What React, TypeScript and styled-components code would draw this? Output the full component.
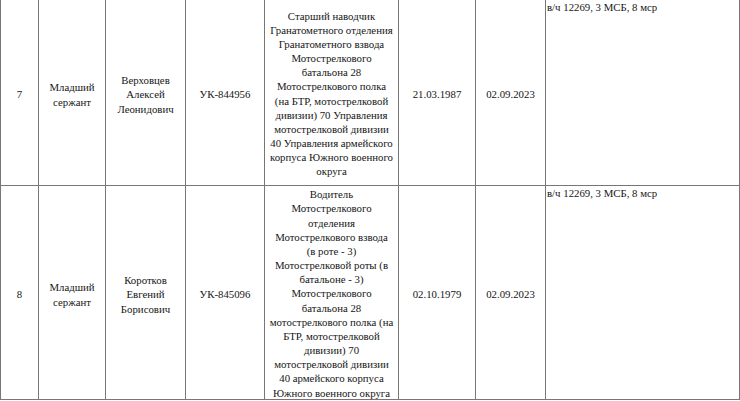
import { Fragment } from "react"
import styled, { createGlobalStyle } from "styled-components"

const GlobalStyle = createGlobalStyle`
    html, body {
        margin: 0;
        padding: 0;
        background: #ffffff;
        overflow: hidden;
        font-family: "Liberation Serif", "Times New Roman", serif;
    }
`

const Sheet = styled.div`
    display: grid;
    grid-template-columns: 37px 66px 79px 78px 133px 76px 69px 193px;
    grid-template-rows: 185px 213px;
    gap: 1px;
    padding: 1px;
    margin-top: -1px;
    width: 740px;
    box-sizing: border-box;
    background-color: #767676;
    font-family: "Liberation Serif", "Times New Roman", serif;
    font-size: 10.8px;
    line-height: 14.15px;
    color: #161616;
`

const Cell = styled.div<{ $tight?: boolean }>`
    display: flex;
    flex-direction: column;
    align-items: center;
    justify-content: center;
    text-align: center;
    background-color: #ffffff;
    padding-top: ${props => props.$tight ? "2px" : "4px"};
    box-sizing: border-box;
    overflow: hidden;
`

const NoteCell = styled.div`
    background-color: #ffffff;
    padding: 0 0 0 1px;
    text-align: left;
    white-space: nowrap;
`

const Line = styled.span`
    display: block;
    white-space: nowrap;
`

interface IRecord {
    num: string
    rank: string[]
    name: string[]
    token: string
    post: string[]
    born: string
    signed: string
    unit: string
}

const records: IRecord[] = [
    {
        num: "7",
        rank: ["Младший", "сержант"],
        name: ["Верховцев", "Алексей", "Леонидович"],
        token: "УК-844956",
        post: [
            "Старший наводчик",
            "Гранатометного отделения",
            "Гранатометного взвода",
            "Мотострелкового",
            "батальона 28",
            "Мотострелкового полка",
            "(на БТР, мотострелковой",
            "дивизии) 70 Управления",
            "мотострелковой дивизии",
            "40 Управления армейского",
            "корпуса Южного военного",
            "округа",
        ],
        born: "21.03.1987",
        signed: "02.09.2023",
        unit: "в/ч 12269, 3 МСБ, 8 мср",
    },
    {
        num: "8",
        rank: ["Младший", "сержант"],
        name: ["Коротков", "Евгений", "Борисович"],
        token: "УК-845096",
        post: [
            "Водитель",
            "Мотострелкового",
            "отделения",
            "Мотострелкового взвода",
            "(в роте - 3)",
            "Мотострелковой роты (в",
            "батальоне - 3)",
            "Мотострелкового",
            "батальона 28",
            "мотострелкового полка (на",
            "БТР, мотострелковой",
            "дивизии) 70",
            "мотострелковой дивизии",
            "40 армейского корпуса",
            "Южного военного округа",
        ],
        born: "02.10.1979",
        signed: "02.09.2023",
        unit: "в/ч 12269, 3 МСБ, 8 мср",
    },
]

function Lines({ items }: { items: string[] }) {
    return (
        <>
            {items.map((text, i) => <Line key={i}>{text}</Line>)}
        </>
    )
}

function App() {
    return (
        <>
            <GlobalStyle />
            <Sheet>
                {records.map(rec => (
                    <Fragment key={rec.num}>
                        <Cell>{rec.num}</Cell>
                        <Cell><Lines items={rec.rank} /></Cell>
                        <Cell><Lines items={rec.name} /></Cell>
                        <Cell>{rec.token}</Cell>
                        <Cell $tight><Lines items={rec.post} /></Cell>
                        <Cell>{rec.born}</Cell>
                        <Cell>{rec.signed}</Cell>
                        <NoteCell>{rec.unit}</NoteCell>
                    </Fragment>
                ))}
            </Sheet>
        </>
    )
}

export default App
